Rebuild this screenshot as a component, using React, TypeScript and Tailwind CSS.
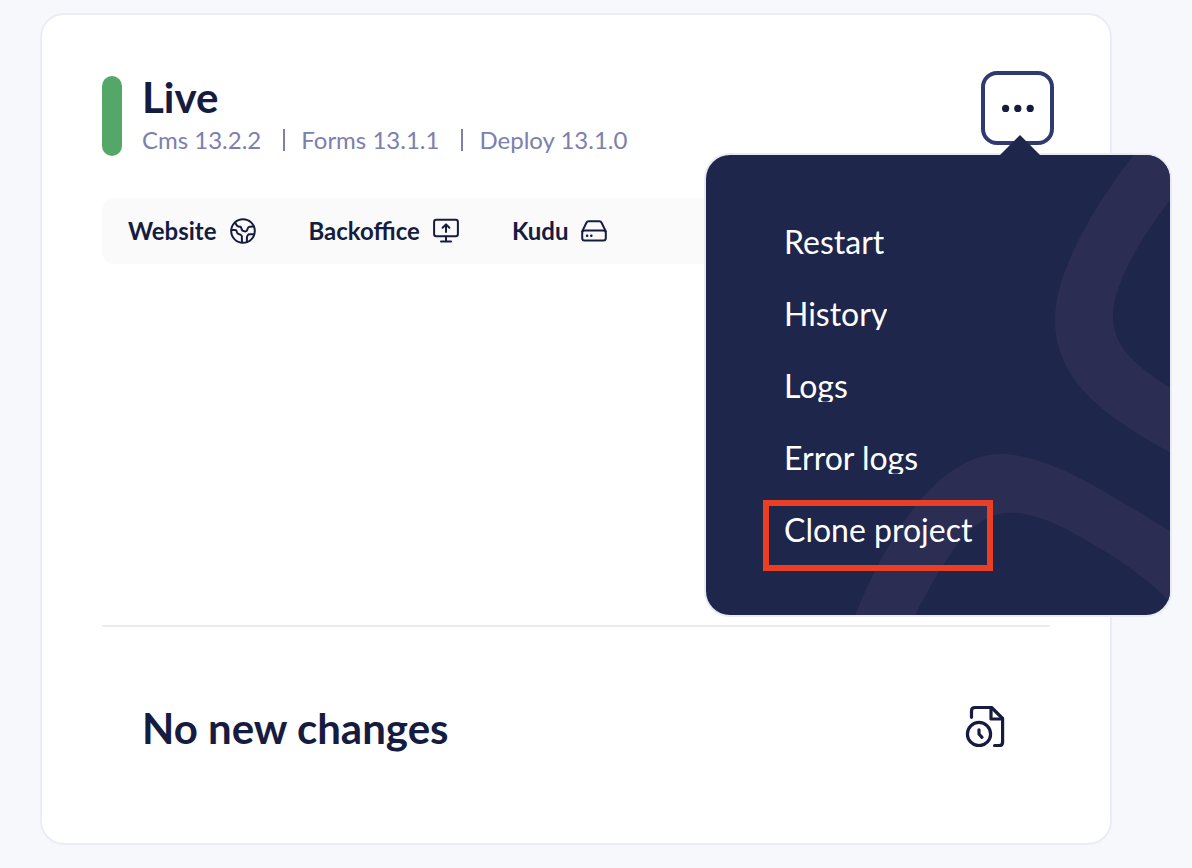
import type { ReactNode } from 'react';

const versions = ['Cms 13.2.2', 'Forms 13.1.1', 'Deploy 13.1.0'];
const actions = ['Restart', 'History', 'Logs', 'Error logs'];

const stroke = {
  fill: 'none',
  stroke: 'currentColor',
  strokeLinecap: 'round',
  strokeLinejoin: 'round',
} as const;

function GlobeIcon() {
  return (
    <svg className="size-[26px]" viewBox="0 0 26 26" strokeWidth="2" aria-hidden="true" {...stroke}>
      <circle cx="13" cy="13" r="11.8" />
      <path d="M1.4 12H5.2Q6.4 12 6.7 13.2L7.2 14.8Q7.5 15.8 8.6 16L10.4 16.6Q11.9 17.2 11.9 18.8V24.2" />
      <path d="M5 4.6L6.8 7.4Q7.4 8.2 8.4 8.4L10.2 8.8Q11.2 9.2 11.4 10.2L11.7 11.6Q12 12.8 13.4 13L15.4 13.4Q16.8 13.4 17.2 12L17.8 10.2Q18.2 9 19.6 8.8L24 8.6" />
      <path d="M24.2 16.3H19.6Q18.400 16.300 17.700 17.300Q16.900 18.400 16.900 19.800V24" />
    </svg>
  );
}

function UploadScreenIcon() {
  return (
    <svg className="size-[26px]" viewBox="0 0 26 26" strokeWidth="2" aria-hidden="true" {...stroke}>
      <rect x="1.1" y="1.8" width="23.8" height="16.4" rx="2.2" />
      <path d="M13 18.4V23M8 23.4h10M13 14V6.800M9.600 9.800L13 6.400l3.400 3.400" />
    </svg>
  );
}

function DriveIcon() {
  return (
    <svg className="size-[26px]" viewBox="0 0 26 26" strokeWidth="2" aria-hidden="true" {...stroke}>
      <path d="M1.2 13.4L5.4 4.7Q6.1 3.3 7.6 3.3h10.8q1.5 0 2.2 1.4l4.2 8.7" />
      <path d="M1.2 15q0-2.4 2.4-2.4h18.8q2.4 0 2.4 2.4v5q0 2.6-2.4 2.6H3.6q-2.4 0-2.4-2.6z" />
      <path d="M6 17.7h.2M10.2 17.7h.2" strokeWidth="2.4" />
    </svg>
  );
}

function FileClockIcon() {
  return (
    <svg className="h-[42px] w-[40px]" viewBox="0 0 40 42" strokeWidth="3.2" aria-hidden="true" {...stroke}>
      <path d="M6.5 12.3V6q0-3.5 3.5-3.5h16.6l11 11V37q0 3.6-3.4 3.6h-4.6" />
      <path d="M26 2.8V14h11.4" />
      <circle cx="14" cy="29" r="11.6" />
      <path d="M14 24.8v4.2l3 3.4" />
    </svg>
  );
}

function MenuBackdrop() {
  return (
    <svg
      className="absolute inset-0 size-full text-[#2b2d52]"
      viewBox="20 30 1392 1380"
      preserveAspectRatio="none"
      fill="currentColor"
      aria-hidden="true"
    >
      <path d="M1303 30C1190 175 1067 375 1067 525C1067 705 1215 815 1412 922V728C1320 668 1241 610 1241 515C1241 425 1310 300 1412 165V30Z" />
      <path d="M467 1410C570 1160 720 927 905 927C1050 927 1225 1045 1412 1158V1370C1320 1280 1240 1232 1150 1180C1075 1137 1000 1103 935 1103C820 1103 750 1215 647 1410Z" />
    </svg>
  );
}

function QuickLink({ label, children }: { label: string; children: ReactNode }) {
  return (
    <a href="#" className="flex items-center gap-[13px]">
      <span>{label}</span>
      {children}
    </a>
  );
}

function ActionsMenu() {
  return (
    <div className="absolute top-[84px] -right-[116px] z-10 w-[464px]">
      <nav className="relative overflow-hidden rounded-3xl bg-[#1e264c] shadow-[0_0_0_2px_#e9ebf4]">
        <MenuBackdrop />
        <ul className="relative flex flex-col items-start gap-10 px-[78px] pt-[71px] pb-[69px] text-[32px] leading-8 text-white">
          {actions.map((action) => (
            <li key={action}>
              <button type="button" className="block h-8 overflow-hidden">{action}</button>
            </li>
          ))}
          <li className="relative">
            <button type="button" className="block h-8">Clone project</button>
            <span className="pointer-events-none absolute -inset-x-[21px] -top-[14px] -bottom-[25px] border-6 border-[#eb3f25]" />
          </li>
        </ul>
      </nav>
      <svg className="absolute -top-5 right-[130px] h-5 w-10 text-[#1e264c]" viewBox="0 0 40 20" aria-hidden="true">
        <path d="M0 20L20 0L40 20Z" fill="currentColor" />
      </svg>
    </div>
  );
}

export default function App() {
  return (
    <div className="min-h-screen overflow-x-hidden bg-[#f7f8fc] pt-[13px] pr-20 pb-6 pl-10 font-['Lato',sans-serif] text-[#161c40]">
      <main className="rounded-3xl border-2 border-[#ebedf6] bg-white px-[60px]">
        <header className="-mr-1 flex items-start justify-between pt-14">
          <div className="mt-[5px] flex gap-5">
            <span className="w-5 rounded-full bg-[#53a868]" />
            <div className="h-20">
              <h1 className="text-[42px] leading-[42px] font-bold">Live</h1>
              <ul className="mt-[7px] flex text-2xl leading-[30px] text-[#7b80ad]">
                {versions.map((version, index) => (
                  <li key={version} className="flex items-center">
                    {index > 0 && <span className="mr-4 ml-[22px] h-[22px] w-[2px] bg-[#7b80ad]" />}
                    {version}
                  </li>
                ))}
              </ul>
            </div>
          </div>
          <div className="relative">
            <button
              type="button"
              aria-label="Project actions"
              className="flex h-[74px] w-[73px] items-center justify-center rounded-2xl border-4 border-[#2f3b70]"
            >
              <svg className="h-2 w-8" viewBox="0 0 32 8" fill="currentColor" aria-hidden="true">
                <circle cx="3.6" cy="4.4" r="3.6" />
                <circle cx="15.8" cy="4.4" r="3.6" />
                <circle cx="28.2" cy="4.4" r="3.6" />
              </svg>
            </button>
            <ActionsMenu />
          </div>
        </header>

        <section className="mt-[42px] min-h-[427px]">
          <div className="flex h-[66px] items-center gap-[53px] rounded-xl bg-[#fafafa] px-[26px] text-2xl font-bold">
            <QuickLink label="Website"><GlobeIcon /></QuickLink>
            <QuickLink label="Backoffice"><UploadScreenIcon /></QuickLink>
            <QuickLink label="Kudu"><DriveIcon /></QuickLink>
          </div>
        </section>

        <section className="flex items-center justify-between border-t-2 border-[#e9ebf4] pt-[76px] pr-[45px] pb-[90px] pl-10">
          <h2 className="text-[42px] leading-[50px] font-bold">No new changes</h2>
          <button type="button" aria-label="Change history" className="pb-1"><FileClockIcon /></button>
        </section>
      </main>
    </div>
  );
}
